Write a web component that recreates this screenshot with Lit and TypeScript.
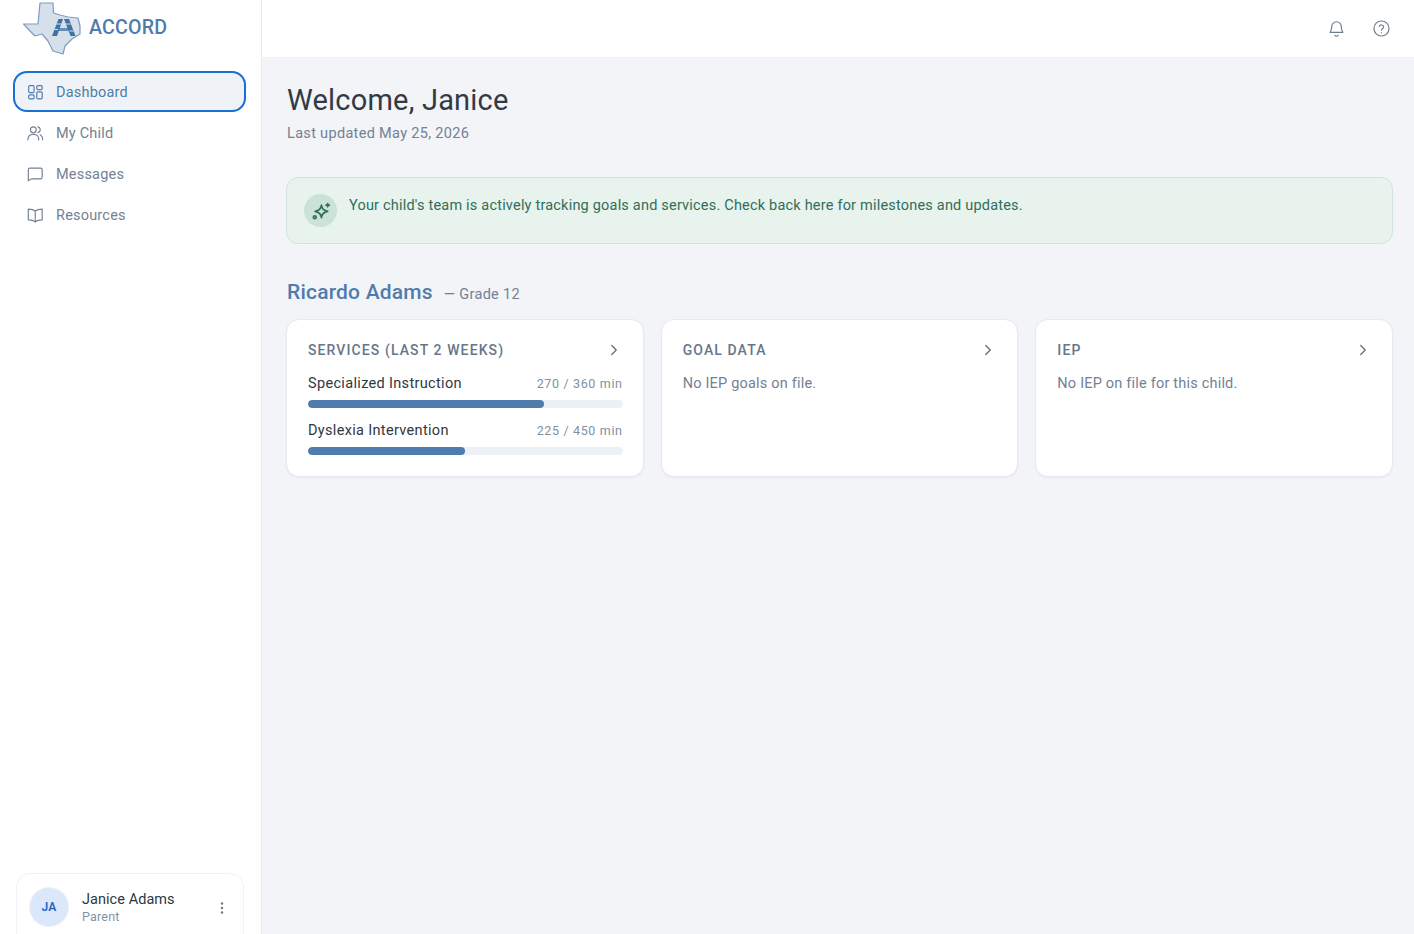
import { LitElement, html, css, svg } from 'lit';
import { customElement } from 'lit/decorators.js';

const icon = (body: unknown, size = 18.5, sw = 1.5) => html`<svg width=${size} height=${size} viewBox="0 0 24 24" fill="none" stroke="currentColor" stroke-width=${sw} stroke-linecap="round" stroke-linejoin="round">${body}</svg>`;

const navItems = [
  { label: 'Dashboard', active: true, icon: svg`<rect x="3.5" y="3.5" width="7" height="9" rx="1.5"/><rect x="14" y="3.5" width="7" height="5" rx="1.5"/><rect x="3.5" y="15.5" width="7" height="5" rx="1.5"/><rect x="14" y="11.5" width="7" height="9" rx="1.5"/>` },
  { label: 'My Child', active: false, icon: svg`<circle cx="9.5" cy="7.5" r="3.8"/><path d="M2.5 20.5v-1a6 6 0 0 1 6-6h2a6 6 0 0 1 6 6v1"/><path d="M15.5 3.8a3.8 3.8 0 0 1 0 7.4"/><path d="M18.5 13.8a6 6 0 0 1 3 5.2v1.5"/>` },
  { label: 'Messages', active: false, icon: svg`<path d="M3 20.5V6a2 2 0 0 1 2-2h14a2 2 0 0 1 2 2v10a2 2 0 0 1-2 2H7z"/>` },
  { label: 'Resources', active: false, icon: svg`<path d="M12 6.5C10 4.8 7 4 3 4v14c4 0 7 .8 9 2.5 2-1.7 5-2.5 9-2.5V4c-4 0-7 .8-9 2.5z"/><path d="M12 6.5v14"/>` },
];

const services = [
  { name: 'Specialized Instruction', used: 270, total: 360 },
  { name: 'Dyslexia Intervention', used: 225, total: 450 },
];

const chevron = icon(svg`<path d="M9 6l6 6-6 6"/>`, 18, 1.6);

@customElement('app-root')
export class AppRoot extends LitElement {
  static styles = css`
    :host {
      display: flex;
      height: 934px;
      overflow: hidden;
      background: #f2f4f8;
      font-family: Roboto, 'Noto Sans', sans-serif;
      color: #2f3742;
      letter-spacing: 0.2px;
    }
    .sidebar {
      width: 262px;
      flex: none;
      box-sizing: border-box;
      background: #fff;
      border-right: 1px solid #e8ebf0;
      display: flex;
      flex-direction: column;
      padding: 0 15px 0 13px;
    }
    .brand {
      height: 55px;
      display: flex;
      align-items: center;
      gap: 8px;
      padding-left: 10px;
      margin-bottom: 16px;
      color: #4f7cac;
      font-size: 19.6px;
      font-weight: 500;
    }
    .brand svg { flex: none; }
    nav { display: flex; flex-direction: column; }
    .nav-item {
      height: 41px;
      box-sizing: border-box;
      display: flex;
      align-items: center;
      gap: 11.5px;
      padding: 1px 0 0 13px;
      font-size: 14.5px;
      color: #738194;
      border-radius: 14px;
    }
    .nav-item svg { flex: none; }
    .nav-item.active {
      background: #eff3f7;
      color: #4f7cac;
      outline: 2px solid #1a6fd4;
      outline-offset: -2px;
    }
    .user {
      margin-top: auto;
      margin-left: 3px;
      width: 228px;
      height: 82px;
      flex: none;
      box-sizing: border-box;
      margin-bottom: -21px;
      border: 1px solid #f0f2f5;
      border-radius: 14px;
      display: flex;
      align-items: flex-start;
      padding: 14px 12px 0 13px;
      gap: 14px;
    }
    .avatar {
      width: 38px;
      height: 38px;
      flex: none;
      border-radius: 50%;
      background: #dbe8fb;
      box-shadow: 0 0 0 1px #eef1f5;
      color: #2463c9;
      font-size: 12px;
      font-weight: 600;
      display: flex;
      align-items: center;
      justify-content: center;
    }
    .user-text { flex: 1; padding-top: 3px; }
    .user-name { font-size: 14.5px; line-height: 18px; letter-spacing: 0.05px; color: #2f3742; }
    .user-role { font-size: 12.5px; line-height: 16px; color: #8592a3; }
    .dots { color: #6f7d8f; padding-top: 11px; }
    .content { flex: 1; min-width: 0; display: flex; flex-direction: column; }
    .topbar {
      height: 57px;
      box-sizing: border-box;
      padding: 0 23px 1px 0;
      flex: none;
      background: #fff;
      display: flex;
      align-items: center;
      justify-content: flex-end;
      gap: 26px;
      color: #6f7d8f;
    }
    .main { padding: 23px 21px 0 24px; }
    h1 {
      margin: 0;
      padding-left: 1px;
      font-size: 29px;
      line-height: 40px;
      font-weight: 400;
      color: #323a46;
    }
    .updated { margin-top: 4px; padding-left: 1px; font-size: 14.5px; line-height: 20px; letter-spacing: 0.32px; color: #738194; }
    .banner {
      margin-top: 33px;
      height: 67px;
      box-sizing: border-box;
      background: #e8f3ee;
      border: 1px solid #cfe5da;
      border-radius: 12px;
      display: flex;
      align-items: flex-start;
      gap: 12px;
      padding: 16px 16px 16px 17px;
      color: #2f6f57;
      font-size: 14.5px;
      line-height: 24px;
    }
    .spark {
      width: 33px;
      height: 33px;
      flex: none;
      border-radius: 50%;
      background: #cbe2d7;
      display: flex;
      align-items: center;
      justify-content: center;
    }
    .child { margin-top: 34px; padding-left: 1px; display: flex; align-items: baseline; gap: 11px; }
    .child-name { font-size: 21px; line-height: 28px; font-weight: 500; color: #4f7cac; }
    .child-grade { font-size: 14.5px; letter-spacing: 0.3px; color: #738194; }
    .cards {
      margin-top: 13px;
      display: grid;
      grid-template-columns: repeat(3, 1fr);
      gap: 17px;
    }
    .card {
      height: 158px;
      box-sizing: border-box;
      background: #fff;
      border: 1px solid #e6e9ef;
      border-radius: 13px;
      box-shadow: 0 1px 2px rgba(30, 45, 70, 0.05);
      padding: 20px 20px 0 21px;
    }
    .card-head {
      display: flex;
      align-items: center;
      justify-content: space-between;
      height: 20px;
      font-size: 14px;
      font-weight: 500;
      letter-spacing: 1.1px;
      color: #677689;
    }
    .card-head svg { color: #5d6b7d; }
    .empty { margin-top: 14px; font-size: 14.5px; line-height: 20px; color: #738194; }
    .svc { margin-top: 13px; }
    .card-head + .svc { margin-top: 14px; }
    .svc-row {
      display: flex;
      align-items: center;
      justify-content: space-between;
      font-size: 14.5px;
      line-height: 20px;
      letter-spacing: 0.33px;
      color: #2f3742;
    }
    .svc-min { font-size: 12.5px; letter-spacing: 0.65px; color: #8290a2; }
    .track {
      margin-top: 6px;
      height: 8px;
      border-radius: 4px;
      background: #edf1f6;
      overflow: hidden;
    }
    .fill { height: 100%; border-radius: 4px; background: #4f7cac; }
  `;

  render() {
    return html`
      <aside class="sidebar">
        <div class="brand">
          <svg width="58" height="54" viewBox="23 0 58 54">
            <path d="M40 2 L53 2 L53.5 12 L60 14 L68 16 L78 17 L80 25 L80 33 L72 38 L65 45 L63 53 L53 50 L48 40 L42 33 L35 35 L30 30 L23.5 23 L38 23 Z" fill="#d6e0eb" stroke="#7d9dbf" stroke-width="1.2" stroke-linejoin="round"/>
            <path d="M52 35 L58.5 18 L63 18 L57 35 Z M64 18 L69 18 L75.5 35 L70.5 35 Z" fill="#3f73a6"/>
            <path d="M57 27 H71 V30 H57 Z" fill="#3f73a6" opacity="0.75"/>
            <path d="M56.5 23 h5 M54.5 28.5 h3.5 M65.500 23 h5 M69.500 30 h4" stroke="#d6e0eb" stroke-width="1"/>
          </svg>
          <span>ACCORD</span>
        </div>
        <nav>
          ${navItems.map(n => html`
            <div class="nav-item ${n.active ? 'active' : ''}">
              ${icon(n.icon)}
              <span>${n.label}</span>
            </div>
          `)}
        </nav>
        <div class="user">
          <div class="avatar">JA</div>
          <div class="user-text">
            <div class="user-name">Janice Adams</div>
            <div class="user-role">Parent</div>
          </div>
          <div class="dots">
            <svg width="18" height="18" viewBox="0 0 24 24" fill="currentColor"><circle cx="12" cy="6" r="1.7"/><circle cx="12" cy="12" r="1.7"/><circle cx="12" cy="18" r="1.7"/></svg>
          </div>
        </div>
      </aside>
      <div class="content">
        <header class="topbar">
          ${icon(svg`<path d="M6 9.5a6 6 0 0 1 12 0c0 5 2 6.5 2 7.5H4c0-1 2-2.5 2-7.5z"/><path d="M10 20.5a2.2 2.2 0 0 0 4 0"/>`, 19)}
          ${icon(svg`<circle cx="12" cy="12" r="9.5"/><path d="M9.3 9.3a2.8 2.8 0 0 1 5.4 .9c0 1.8-2.7 2.4-2.7 3.8"/><path d="M12 17.2v.1"/>`, 19)}
        </header>
        <main class="main">
          <h1>Welcome, Janice</h1>
          <div class="updated">Last updated May 25, 2026</div>
          <div class="banner">
            <div class="spark">
              <svg width="20" height="20" viewBox="0 0 24 24" fill="none" stroke="#2f6f57" stroke-width="2" stroke-linejoin="round" stroke-linecap="round">
                <path d="M12.5 5 C13 9.5 15 11.5 20 12.5 C15 13.5 13 15.5 12.5 20 C12 15.5 10 13.5 5 12.5 C10 11.5 12 9.5 12.5 5 Z"/>
                <path d="M20 3v4M18 5h4"/><circle cx="4.5" cy="19.5" r="1.7"/>
              </svg>
            </div>
            <span>Your child's team is actively tracking goals and services. Check back here for milestones and updates.</span>
          </div>
          <div class="child">
            <span class="child-name">Ricardo Adams</span>
            <span class="child-grade">— Grade 12</span>
          </div>
          <div class="cards">
            <div class="card">
              <div class="card-head"><span>SERVICES (LAST 2 WEEKS)</span>${chevron}</div>
              ${services.map(s => html`
                <div class="svc">
                  <div class="svc-row"><span>${s.name}</span><span class="svc-min">${s.used} / ${s.total} min</span></div>
                  <div class="track"><div class="fill" style="width:${(s.used / s.total) * 100}%"></div></div>
                </div>
              `)}
            </div>
            <div class="card">
              <div class="card-head"><span>GOAL DATA</span>${chevron}</div>
              <div class="empty">No IEP goals on file.</div>
            </div>
            <div class="card">
              <div class="card-head"><span>IEP</span>${chevron}</div>
              <div class="empty">No IEP on file for this child.</div>
            </div>
          </div>
        </main>
      </div>
    `;
  }
}
